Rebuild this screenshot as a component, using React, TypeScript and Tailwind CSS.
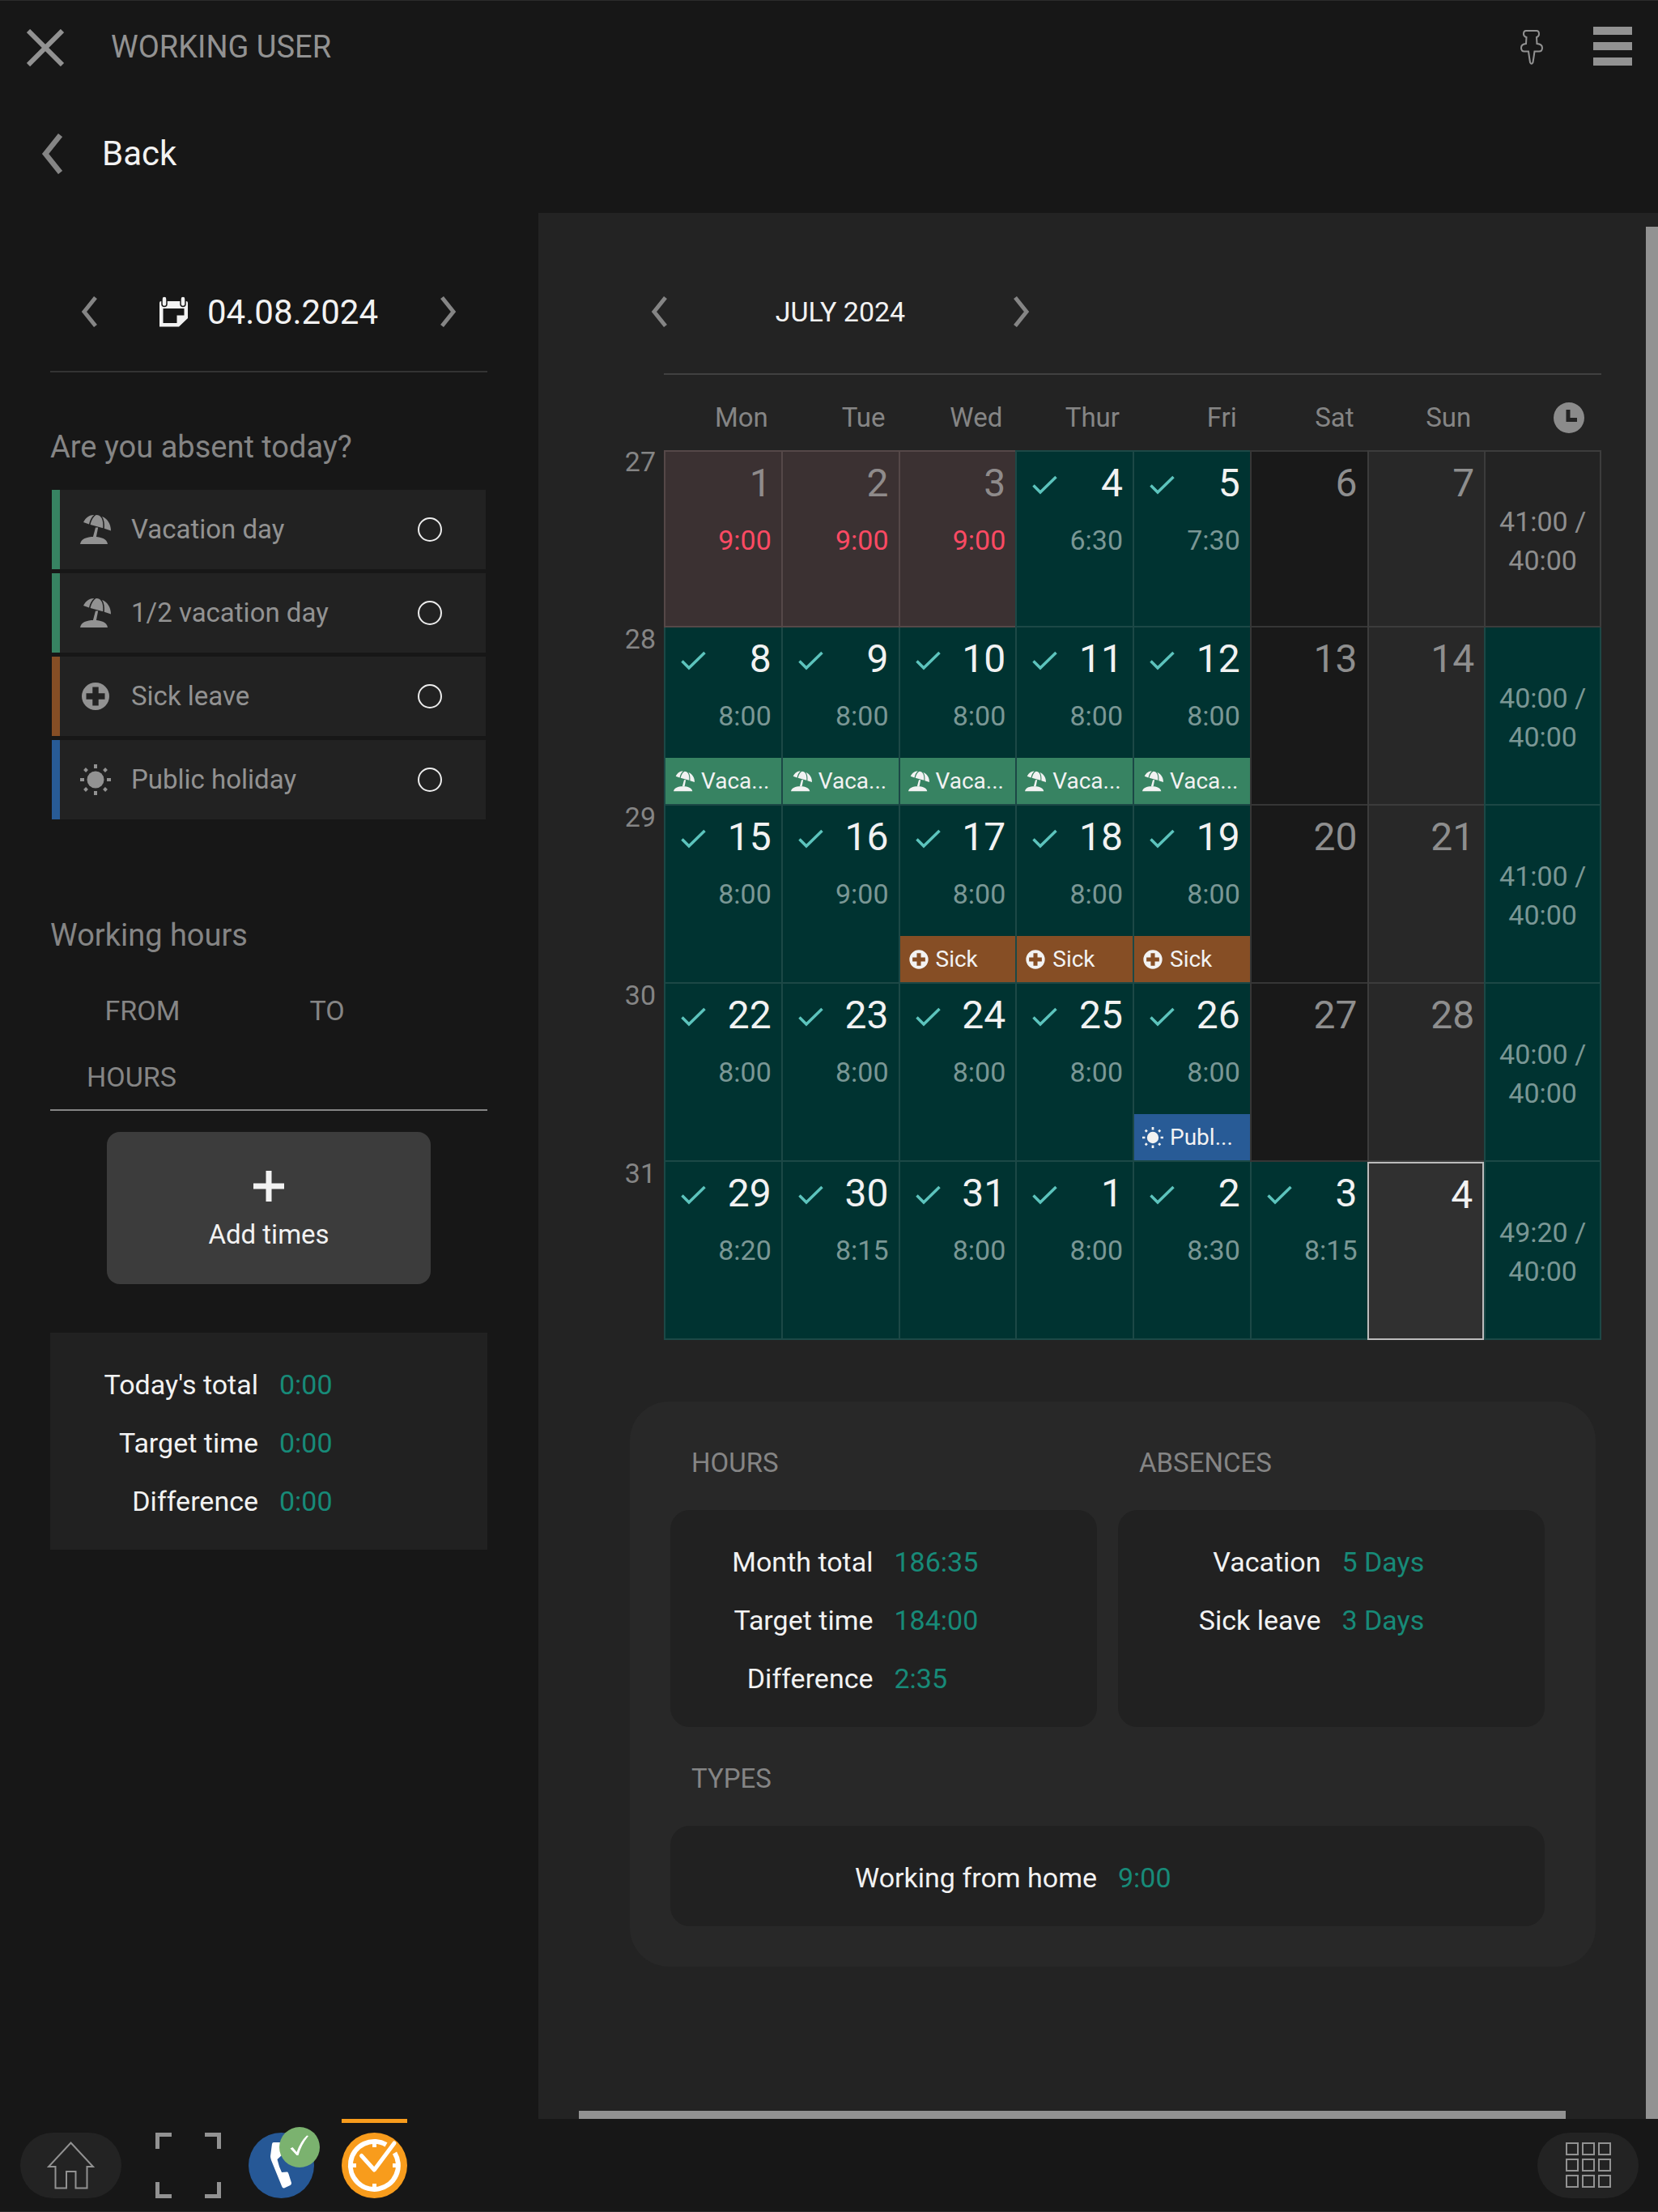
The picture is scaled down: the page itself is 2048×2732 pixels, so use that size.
import { useState } from "react";
import type { ReactNode } from "react";

type AbsenceKind = "vacation" | "sick" | "holiday";
type Tone = "missing" | "done" | "saturday" | "sunday" | "today";
type Day = { n: number; tone: Tone; time?: string; tag?: AbsenceKind };
type Week = { no: number; days: Day[]; total: string; target: string; met: boolean };

const done = (n: number, time: string, tag?: AbsenceKind): Day => ({ n, tone: "done", time, tag });
const missing = (n: number): Day => ({ n, tone: "missing", time: "9:00" });
const weekend = (n: number): Day[] => [{ n, tone: "saturday" }, { n: n + 1, tone: "sunday" }];

const WEEKS: Week[] = [
  { no: 27, total: "41:00", target: "40:00", met: false, days: [missing(1), missing(2), missing(3), done(4, "6:30"), done(5, "7:30"), ...weekend(6)] },
  { no: 28, total: "40:00", target: "40:00", met: true, days: [done(8, "8:00", "vacation"), done(9, "8:00", "vacation"), done(10, "8:00", "vacation"), done(11, "8:00", "vacation"), done(12, "8:00", "vacation"), ...weekend(13)] },
  { no: 29, total: "41:00", target: "40:00", met: true, days: [done(15, "8:00"), done(16, "9:00"), done(17, "8:00", "sick"), done(18, "8:00", "sick"), done(19, "8:00", "sick"), ...weekend(20)] },
  { no: 30, total: "40:00", target: "40:00", met: true, days: [done(22, "8:00"), done(23, "8:00"), done(24, "8:00"), done(25, "8:00"), done(26, "8:00", "holiday"), ...weekend(27)] },
  { no: 31, total: "49:20", target: "40:00", met: true, days: [done(29, "8:20"), done(30, "8:15"), done(31, "8:00"), done(1, "8:00"), done(2, "8:30"), done(3, "8:15"), { n: 4, tone: "today" }] },
];

const CELL: Record<Tone, string> = {
  missing: "border-l-2 border-b-2 border-[#554848] bg-[#3b3132] text-[#8f8b8b]",
  done: "border-l-2 border-b-2 border-[#1c4846] bg-[#003331] text-[#f2f2f2]",
  saturday: "border-l-2 border-b-2 border-[#363636] bg-[#191919] text-[#8e8e8e]",
  sunday: "border-l-2 border-b-2 border-[#3c3c3c] bg-[#282828] text-[#8e8e8e]",
  today: "border-2 border-[#bcbcbc] bg-[#303030] text-[#f2f2f2]",
};

const TAGS: Record<AbsenceKind, { label: string; bg: string }> = {
  vacation: { label: "Vaca...", bg: "bg-[#378362]" },
  sick: { label: "Sick", bg: "bg-[#864e25]" },
  holiday: { label: "Publ...", bg: "bg-[#285b96]" },
};

const ABSENCES: { id: string; label: string; kind: AbsenceKind; edge: string }[] = [
  { id: "full", label: "Vacation day", kind: "vacation", edge: "border-[#378362]" },
  { id: "half", label: "1/2 vacation day", kind: "vacation", edge: "border-[#378362]" },
  { id: "sick", label: "Sick leave", kind: "sick", edge: "border-[#864e25]" },
  { id: "holiday", label: "Public holiday", kind: "holiday", edge: "border-[#285b96]" },
];

function Chevron({ dir, className }: { dir: "left" | "right"; className: string }) {
  return (
    <svg viewBox="0 0 20 38" className={className} fill="none" stroke="#858585" strokeWidth="5">
      <path d={dir === "left" ? "M18 1.5 4 19l14 17.5" : "M2 1.5 16 19 2 36.5"} />
    </svg>
  );
}

function AbsenceIcon({ kind, className }: { kind: AbsenceKind; className: string }) {
  if (kind === "vacation") {
    return (
      <svg viewBox="0 0 38 37" className={className} fill="currentColor">
        <path d="M4 9.5C7 3 12 .3 17.2.4 14 3 12 7 11 12Z" />
        <path d="M12.6 12.4C14 6 17 1.8 20 .5c6 0 9 6 8.2 16.3Z" />
        <path d="M29.8 17.3C30.3 11 29.4 6 27 2.6 33.5 5 38 11.5 38 20Z" />
        <path d="M19 16h3.2l-2.4 12h-4Z" />
        <path d="M0 36.5C1 30 8 27.5 17 27.5s16 2.5 17 9Z" />
      </svg>
    );
  }
  if (kind === "sick") {
    return (
      <svg viewBox="0 0 38 38" className={className} fill="currentColor" fillRule="evenodd">
        <path d="M19 2a17 17 0 1 0 0 34 17 17 0 0 0 0-34ZM15.3 7.5h7.4v7.8h7.8v7.4h-7.8v7.8h-7.4v-7.8H7.5v-7.4h7.8Z" />
      </svg>
    );
  }
  return (
    <svg viewBox="0 0 38 38" className={className} fill="currentColor">
      <circle cx="19" cy="19" r="10.5" />
      <g stroke="currentColor" strokeWidth="4">
        <path d="M19 0v5M19 33v5M0 19h5M33 19h5M5.5 5.5l3 3M29.5 29.5l3 3M5.5 32.5l3-3M29.5 8.5l3-3" />
      </g>
    </svg>
  );
}

function CalendarIcon() {
  return (
    <svg viewBox="0 0 35 38" className="h-[38px] w-[35px]" fill="#f2f2f2">
      <path fillRule="evenodd" d="M0 8q0-2 2-2h31q2 0 2 2v19L24 37.500H0ZM4.500 15v18h17v-9.500h9V15Z" />
      <rect x="3" y="0" width="6" height="12.500" rx="3" stroke="#171717" strokeWidth="1.500" />
      <rect x="26" y="0" width="6" height="12.500" rx="3" stroke="#171717" strokeWidth="1.500" />
    </svg>
  );
}

function Totals({ rows }: { rows: [string, string][] }) {
  return (
    <dl className="pt-7 pb-6 text-[34px]">
      {rows.map(([label, value]) => (
        <div key={label} className="grid h-[72px] grid-cols-2 items-center gap-[26px]">
          <dt className="text-right whitespace-nowrap text-[#f2f2f2]">{label}</dt>
          <dd className="whitespace-nowrap text-[#178a78]">{value}</dd>
        </div>
      ))}
    </dl>
  );
}

function DayCell({ day, first }: { day: Day; first: boolean }) {
  const height = first ? "h-[215px]" : day.tone === "today" ? "h-[216px]" : "h-[218px]";
  return (
    <td className={`p-0 align-top ${first ? "border-t-2" : ""} ${CELL[day.tone]}`}>
      <div className={`flex flex-col ${height}`}>
        <div className="mt-[11px] flex items-center pr-3 pl-[19px]">
          {day.tone === "done" && (
            <svg viewBox="0 0 31 24" className="mt-1 h-6 w-[31px]" fill="none" stroke="#5cc4bd" strokeWidth="3.5">
              <path d="M1.5 12.5 10 21 29.5 2" />
            </svg>
          )}
          <span className="ml-auto text-[48px] leading-[56px]">{day.n}</span>
        </div>
        {day.time && (
          <span className={`mt-[18px] pr-3 text-right text-[34px] leading-[48px] ${day.tone === "missing" ? "text-[#fb4a63]" : "text-[#7a9795]"}`}>{day.time}</span>
        )}
        {day.tag && (
          <div className={`mt-auto flex h-[57px] items-center gap-2 pl-[10px] text-[28px] whitespace-nowrap ${TAGS[day.tag].bg}`}>
            <AbsenceIcon kind={day.tag} className="h-[26px] w-[26px]" />
            {TAGS[day.tag].label}
          </div>
        )}
      </div>
    </td>
  );
}

function Calendar() {
  return (
    <table className="w-full table-fixed border-separate border-spacing-0">
      <colgroup>
        <col className="w-[55px]" />
        <col span={8} />
      </colgroup>
      <thead>
        <tr className="h-[93px] text-[33px] text-[#858585]">
          <td />
          {["Mon", "Tue", "Wed", "Thur", "Fri", "Sat", "Sun"].map((d) => (
            <th key={d} scope="col" className="p-0 pt-3 pr-4 text-right font-normal">{d}</th>
          ))}
          <th scope="col" aria-label="Week total" className="p-0 pt-3 pr-[21px]">
            <svg viewBox="0 0 38 38" className="ml-auto h-[38px] w-[38px]" fill="#8b8b8b" fillRule="evenodd">
              <path d="M19 0a19 19 0 1 0 0 38 19 19 0 0 0 0-38ZM15.500 9h5v10H29v5H15.500Z" />
            </svg>
          </th>
        </tr>
      </thead>
      <tbody>
        {WEEKS.map((w, i) => (
          <tr key={w.no}>
            <th scope="row" className="p-0 pr-[10px] text-right align-top text-[34px] leading-[29px] font-normal text-[#858585]">{w.no}</th>
            {w.days.map((d) => <DayCell key={d.n} day={d} first={i === 0} />)}
            <td className={`border-x-2 border-b-2 p-0 pt-1 text-center text-[34px] leading-[48px] ${i === 0 ? "border-t-2" : ""} ${w.met ? "border-[#1c4846] bg-[#003331] text-[#7a9795]" : "border-[#3c3c3c] text-[#8e8e8e]"}`}>
              {w.total} /<br />{w.target}
            </td>
          </tr>
        ))}
      </tbody>
    </table>
  );
}

function Group({ title, className = "", children }: { title: string; className?: string; children: ReactNode }) {
  return (
    <section className={className}>
      <h3 className="pl-[26px] text-[33px] leading-[48px] text-[#858585]">{title}</h3>
      <div className="mt-[34px] flex-1 rounded-3xl bg-[#212121]">{children}</div>
    </section>
  );
}

export default function App() {
  const [absence, setAbsence] = useState<string | null>(null);

  return (
    <div className="flex min-h-screen flex-col border-y border-[#2c2c2c] bg-[#171717] font-['Roboto',sans-serif] text-[#f2f2f2]">
      <header className="flex h-[115px] items-center pr-8 pl-[33px]">
        <button aria-label="Close">
          <svg viewBox="0 0 46 46" className="h-[46px] w-[46px]" stroke="#929292" strokeWidth="6">
            <path d="M2 2 44 44M44 2 2 44" />
          </svg>
        </button>
        <h1 className="ml-[58px] text-[38px] text-[#929292]">WORKING USER</h1>
        <button aria-label="Pin" className="ml-auto">
          <svg viewBox="0 0 28 43" className="h-[43px] w-7" fill="none" stroke="#929292" strokeWidth="2">
            <path d="M7 1h13q3 0 3 4 0 3-3 4l.5 8Q27 17.500 27 22q0 4.500-4 4.500h-5.500q-1 7.500-2 13.500-1.800 3.500-3.500 0-1-6-2-13.500H5q-4 0-4-4.500Q1 17.500 7 17l.5-8Q4 8 4 5q0-4 3-4Z" />
          </svg>
        </button>
        <button aria-label="Menu" className="mb-1 ml-[62px] flex flex-col gap-[9px]">
          <span className="h-[10px] w-12 bg-[#929292]" />
          <span className="h-[10px] w-12 bg-[#929292]" />
          <span className="h-[10px] w-12 bg-[#929292]" />
        </button>
      </header>

      <div className="flex h-[147px] items-center pl-[50px]">
        <a href="#back" className="flex items-center gap-12 text-[42px]">
          <Chevron dir="left" className="h-[50px] w-7" /> Back
        </a>
      </div>

      <div className="flex flex-1">
        <aside className="w-[665px] shrink-0 pt-[90px] pr-[63px] pl-[62px]">
          <div className="flex h-16 items-center justify-between px-[38px]">
            <button aria-label="Previous day"><Chevron dir="left" className="h-[38px] w-5" /></button>
            <button className="flex items-center gap-6 text-[42px]"><CalendarIcon /> 04.08.2024</button>
            <button aria-label="Next day"><Chevron dir="right" className="h-[38px] w-5" /></button>
          </div>
          <hr className="mt-[41px] border-t-2 border-[#333333]" />

          <fieldset>
            <legend className="pt-[68px] text-[38px] leading-[48px] text-[#858585]">Are you absent today?</legend>
            <div className="mt-[29px] flex flex-col gap-[5px] px-0.5">
              {ABSENCES.map((a) => (
                <label key={a.id} className={`flex h-[98px] items-center border-l-[10px] bg-[#222222] pr-[54px] pl-[25px] text-[33px] text-[#929292] ${a.edge}`}>
                  <AbsenceIcon kind={a.kind} className="h-[38px] w-[38px]" />
                  <span className="ml-[25px]">{a.label}</span>
                  <input
                    type="radio"
                    name="absence"
                    checked={absence === a.id}
                    onChange={() => setAbsence(a.id)}
                    className="ml-auto h-[30px] w-[30px] appearance-none rounded-full border-2 border-[#ececec] checked:bg-[#178a78]"
                  />
                </label>
              ))}
            </div>
          </fieldset>

          <h2 className="mt-[119px] text-[38px] leading-[48px] text-[#858585]">Working hours</h2>
          <div className="mt-[45px] flex flex-wrap gap-y-[34px] border-b-2 border-[#858585] pb-4 text-center text-[34px] leading-[48px] text-[#858585]">
            <span className="w-[228px]">FROM</span>
            <span className="w-[228px]">TO</span>
            <span className="w-[201px]">HOURS</span>
          </div>
          <button className="mx-auto mt-[26px] flex h-[188px] w-[400px] flex-col items-center justify-center gap-4 rounded-2xl bg-[#3c3c3c] pt-3 text-[33px]">
            <svg viewBox="0 0 38 38" className="h-[38px] w-[38px]" stroke="#f2f2f2" strokeWidth="7">
              <path d="M19 0v38M0 19h38" />
            </svg>
            Add times
          </button>
          <div className="mt-[60px] bg-[#212121]">
            <Totals rows={[["Today's total", "0:00"], ["Target time", "0:00"], ["Difference", "0:00"]]} />
          </div>
        </aside>

        <main className="flex flex-1 bg-[#232323]">
          <div className="flex flex-1 flex-col">
            <div className="flex-1 pt-[90px] pr-[55px] pl-[100px]">
              <div className="ml-[39px] flex h-16 w-[468px] items-center justify-between">
                <button aria-label="Previous month"><Chevron dir="left" className="h-[38px] w-5" /></button>
                <h2 className="text-[34px]">JULY 2024</h2>
                <button aria-label="Next month"><Chevron dir="right" className="h-[38px] w-5" /></button>
              </div>
              <hr className="mt-11 ml-[55px] border-t-2 border-[#404040]" />
              <Calendar />

              <div className="mt-[76px] mr-[7px] ml-[13px] rounded-[48px] bg-[#282828] pt-[52px] pr-[63px] pb-[50px] pl-[50px]">
                <div className="grid grid-cols-2 gap-[26px]">
                  <Group title="HOURS" className="flex flex-col">
                    <Totals rows={[["Month total", "186:35"], ["Target time", "184:00"], ["Difference", "2:35"]]} />
                  </Group>
                  <Group title="ABSENCES" className="flex flex-col">
                    <Totals rows={[["Vacation", "5 Days"], ["Sick leave", "3 Days"]]} />
                  </Group>
                </div>
                <Group title="TYPES" className="mt-10">
                  <Totals rows={[["Working from home", "9:00"]]} />
                </Group>
              </div>
            </div>
            <div className="mr-[99px] ml-[50px] h-[10px] bg-[#929292]" />
          </div>
          <div className="mt-[17px] w-[15px] bg-[#929292]" />
        </main>
      </div>

      <footer className="flex h-[114px] items-center pr-6 pl-[25px]">
        <button aria-label="Home" className="flex h-[81px] w-[125px] items-center justify-center rounded-full bg-[#232323]">
          <svg viewBox="0 0 59 59" className="h-[59px] w-[59px]" fill="none" stroke="#929292" strokeWidth="2">
            <path d="M29.500 1.500 57 31h-7.500v26.500H35.500V37H24v20.500H10.500V31H2Z" />
          </svg>
        </button>
        <button aria-label="Full screen" className="ml-[42px]">
          <svg viewBox="0 0 81 81" className="h-[81px] w-[81px]" fill="none" stroke="#929292" strokeWidth="5">
            <path d="M20 2.500H2.500V20M61 2.500h17.500V20M20 78.500H2.500V61M61 78.500h17.500V61" />
          </svg>
        </button>
        <button aria-label="Phone" className="relative ml-[34px]">
          <svg viewBox="0 0 81 81" className="h-[81px] w-[81px]">
            <circle cx="40.500" cy="40.500" r="40.500" fill="#265896" />
            <path fill="#fff" d="M31 12h8l3 15-6.500 6q2 9 5.500 16l7-.5q1 .5 1.500 2.500L53 62q.3 2-1.500 3L44 68.500q-2 .5-3-2.500L28 34q-1-3-1-5l2-15q.3-2 2-2Z" />
          </svg>
          <svg viewBox="0 0 50 50" className="absolute -top-[7px] left-[38px] h-[50px] w-[50px]">
            <circle cx="25" cy="25" r="25" fill="#7bb26f" />
            <path fill="#fff" d="M13.500 26.500l3-1.500 5 6Q26 18 34 10.500l2 .5Q27 22 23.500 35h-2Z" />
          </svg>
        </button>
        <button aria-label="Time tracking" className="relative ml-[34px] flex h-full items-center">
          <span className="absolute top-0 left-0 h-[5px] w-full bg-[#f89c1c]" />
          <svg viewBox="0 0 81 81" className="h-[81px] w-[81px]" fill="none" stroke="#fff">
            <circle cx="40.500" cy="40.500" r="40.500" fill="#f89c1c" stroke="none" />
            <path strokeWidth="6" d="M65.500 25A29.500 29.500 0 1 1 55 14.800" />
            <path strokeWidth="5" d="M40.500 12v6M40.500 63v6M12 40.500h6M63 40.500h6" />
            <path strokeWidth="5" strokeLinecap="round" strokeLinejoin="round" d="M24.500 28.500 40.300 46 65 13" />
          </svg>
        </button>
        <button aria-label="Apps" className="ml-auto flex h-[81px] w-[125px] items-center justify-center rounded-full bg-[#232323]">
          <span className="grid grid-cols-3 gap-1">
            {Array.from({ length: 9 }, (_, i) => <span key={i} className="h-4 w-4 border-2 border-[#929292]" />)}
          </span>
        </button>
      </footer>
    </div>
  );
}
